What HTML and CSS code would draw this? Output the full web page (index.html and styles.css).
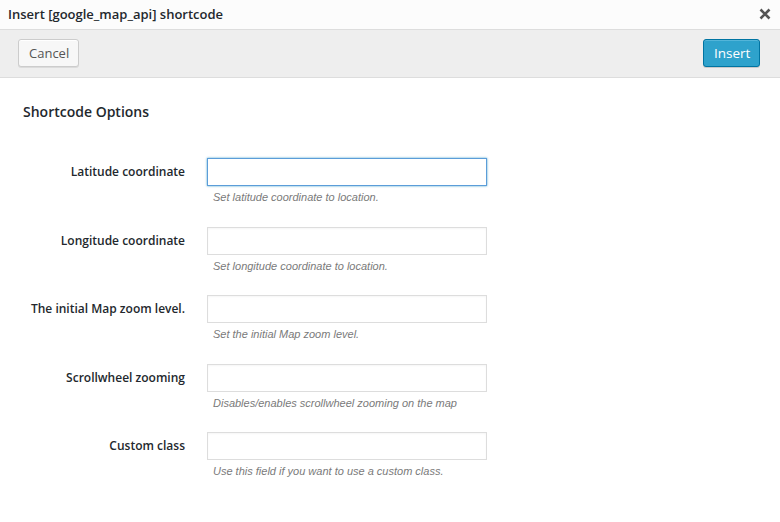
FILE: index.html
```html
<!DOCTYPE html>
<html>
<head>
<meta charset="utf-8">
<link rel="stylesheet" href="styles.css">
</head>
<body>
<div class="modal">
  <div class="titlebar">
    <span class="title">Insert [google_map_api] shortcode</span>
    <span class="close" aria-label="Close">
      <svg width="12" height="12" viewBox="0 0 12 12"><path d="M1.5 1.5 L10.5 10.5 M10.5 1.5 L1.5 10.5" stroke="#555" stroke-width="2.6" stroke-linecap="butt"/></svg>
    </span>
  </div>
  <div class="toolbar">
    <button class="btn btn-cancel">Cancel</button>
    <button class="btn btn-primary">Insert</button>
  </div>
  <div class="content">
    <h2 class="section-title">Shortcode Options</h2>
    <div class="form">
      <div class="row">
        <label class="label">Latitude coordinate</label>
        <div class="field">
          <input class="input focused" type="text">
          <p class="desc">Set latitude coordinate to location.</p>
        </div>
      </div>
      <div class="row">
        <label class="label">Longitude coordinate</label>
        <div class="field">
          <input class="input" type="text">
          <p class="desc">Set longitude coordinate to location.</p>
        </div>
      </div>
      <div class="row">
        <label class="label">The initial Map zoom level.</label>
        <div class="field">
          <input class="input" type="text">
          <p class="desc">Set the initial Map zoom level.</p>
        </div>
      </div>
      <div class="row">
        <label class="label">Scrollwheel zooming</label>
        <div class="field">
          <input class="input" type="text">
          <p class="desc">Disables/enables scrollwheel zooming on the map</p>
        </div>
      </div>
      <div class="row">
        <label class="label">Custom class</label>
        <div class="field">
          <input class="input" type="text">
          <p class="desc">Use this field if you want to use a custom class.</p>
        </div>
      </div>
    </div>
  </div>
</div>
</body>
</html>
```
FILE: styles.css
```css
html, body {
  margin: 0;
  padding: 0;
  background: #fff;
}
body {
  font-family: "Open Sans", "Liberation Sans", sans-serif;
  color: #333;
  width: 780px;
  height: 522px;
  overflow: hidden;
}
.modal {
  display: flex;
  flex-direction: column;
}
.titlebar {
  height: 29px;
  border-bottom: 1px solid #dddddd;
  background: #fcfcfc;
  display: flex;
  align-items: center;
  justify-content: space-between;
  padding: 0 8px 0 8px;
}
.title {
  font-size: 13px;
  font-weight: 600;
  color: #23282d;
  line-height: 29px;
}
.close {
  display: flex;
  align-items: center;
  justify-content: center;
  width: 14px;
  height: 14px;
  margin-top: -1px;
}
.toolbar {
  background: #eeeeee;
  border-bottom: 1px solid #dddddd;
  display: flex;
  align-items: flex-start;
  justify-content: space-between;
  padding: 9px 20px 0 18px;
  box-sizing: border-box;
  height: 48px;
}
.btn {
  height: 28px;
  box-sizing: border-box;
  padding: 0 10px 1px;
  font-family: "Open Sans", "Liberation Sans", sans-serif;
  font-size: 13px;
  line-height: 26px;
  border-radius: 3px;
  border: 1px solid #cccccc;
  cursor: pointer;
}
.btn-cancel {
  background: #f7f7f7;
  color: #555555;
  box-shadow: inset 0 1px 0 #fff, 0 1px 0 rgba(0,0,0,.08);
  width: 61px;
}
.btn-primary {
  background: #2ea2cc;
  border-color: #0074a2;
  color: #ffffff;
  box-shadow: inset 0 1px 0 rgba(120,200,230,.5), 0 1px 0 rgba(0,0,0,.15);
  width: 57px;
  font-size: 13.5px;
}
.content {
  padding: 0 23px;
}
.section-title {
  margin: 24px 0 0;
  font-size: 14px;
  font-weight: 600;
  line-height: 19px;
  color: #23282d;
}
.form {
  margin-top: 37px;
  display: flex;
  flex-direction: column;
  gap: 21px;
}
.row {
  display: flex;
  align-items: flex-start;
  height: 47.5px;
}
.label {
  width: 162px;
  flex: none;
  text-align: right;
  font-size: 12px;
  font-weight: 600;
  color: #23282d;
  line-height: 28px;
  white-space: nowrap;
}
.field {
  margin-left: 22px;
}
.input {
  display: block;
  width: 280px;
  height: 28px;
  box-sizing: border-box;
  margin: 0;
  border: 1px solid #dddddd;
  background: #fff;
  box-shadow: inset 0 1px 2px rgba(0,0,0,.04);
  outline: none;
}
.input.focused {
  border-color: #5b9dd9;
  box-shadow: 0 0 2px rgba(30,140,190,.8);
}
.desc {
  margin: 4px 0 0 6px;
  font-family: "Liberation Sans", Arial, sans-serif;
  font-style: italic;
  font-size: 11px;
  line-height: 14px;
  color: #7a7a7a;
}
```
